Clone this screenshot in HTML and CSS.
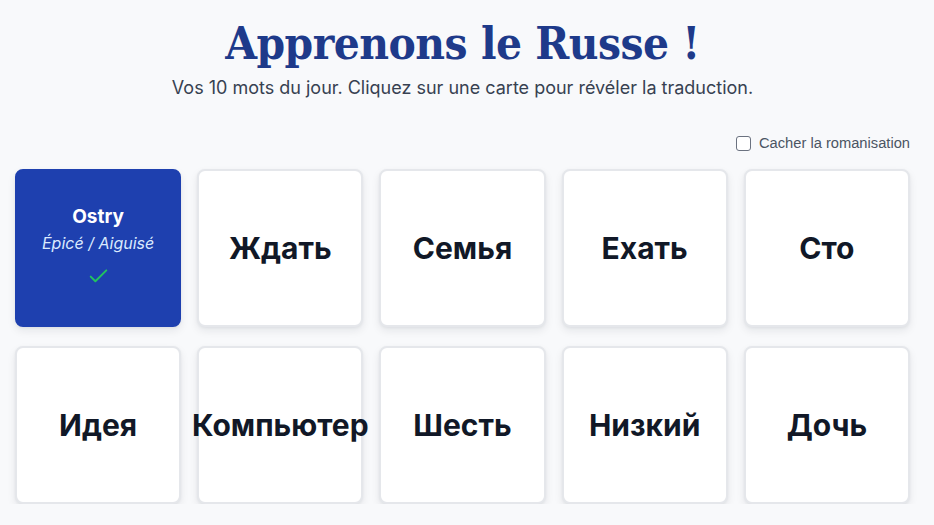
FILE: index.html
```html
<!DOCTYPE html>
<html lang="fr">
<head>
<meta charset="utf-8">
<title>Apprenons le Russe !</title>
<link rel="stylesheet" href="styles.css">
</head>
<body>
<main class="page">
  <header class="header">
    <h1 class="title">Apprenons le Russe !</h1>
    <p class="subtitle">Vos 10 mots du jour. Cliquez sur une carte pour révéler la traduction.</p>
  </header>
  <div class="toolbar">
    <label class="toggle"><input type="checkbox" class="toggle-box"><span>Cacher la romanisation</span></label>
  </div>
  <section class="grid">
    <div class="card card-revealed">
      <div class="roman">Ostry</div>
      <div class="translation">Épicé / Aiguisé</div>
      <svg class="check" viewBox="0 0 24 24" width="25" height="25"><path d="M4.5 13l4.5 4.5L19.5 7" fill="none" stroke="#22c55e" stroke-width="1.8" stroke-linecap="round" stroke-linejoin="round"/></svg>
    </div>
    <div class="card"><span class="word">Ждать</span></div>
    <div class="card"><span class="word">Семья</span></div>
    <div class="card"><span class="word">Ехать</span></div>
    <div class="card"><span class="word">Сто</span></div>
    <div class="card"><span class="word">Идея</span></div>
    <div class="card"><span class="word">Компьютер</span></div>
    <div class="card"><span class="word">Шесть</span></div>
    <div class="card"><span class="word">Низкий</span></div>
    <div class="card"><span class="word">Дочь</span></div>
  </section>
</main>
</body>
</html>
```
FILE: styles.css
```css
* { box-sizing: border-box; }
html, body { margin: 0; padding: 0; }
body {
  background: #f8f9fb;
  font-family: Inter, "Noto Sans", sans-serif;
  color: #111827;
  overflow: hidden;
}
.page {
  padding: 12px 24px 0 15px;
}
.header {
  text-align: center;
}
.title {
  margin: 0;
  font-family: "DejaVu Serif", serif;
  font-stretch: condensed;
  font-weight: 700;
  font-size: 45.5px;
  line-height: 62px;
  color: #1e3a8a;
  letter-spacing: -0.5px;
}
.subtitle {
  margin: 2px 0 0;
  font-size: 18px;
  line-height: 24px;
  color: #374151;
}
.toolbar {
  display: flex;
  justify-content: flex-end;
  margin-top: 35px;
}
.toggle {
  display: flex;
  align-items: center;
  gap: 8px;
  font-family: "Liberation Sans", Arial, sans-serif;
  font-size: 14.7px;
  color: #4b5563;
}
.toggle-box {
  margin: 0;
  width: 15px;
  height: 15px;
  appearance: none;
  border: 1px solid #6b7280;
  border-radius: 3px;
  background: #fff;
}
.grid {
  display: grid;
  grid-template-columns: repeat(5, minmax(0, 1fr));
  column-gap: 16px;
  row-gap: 19px;
  margin-top: 18px;
  width: 895px;
}
.card {
  height: 158px;
  min-width: 0;
  background: #fff;
  border: 2px solid #e5e7eb;
  border-radius: 8px;
  box-shadow: 0 4px 8px rgba(15, 23, 42, 0.08), 0 1px 3px rgba(15, 23, 42, 0.05);
  display: flex;
  flex-direction: column;
  align-items: center;
  justify-content: center;
}
.word {
  font-size: 30px;
  font-weight: 700;
  color: #111827;
  white-space: nowrap;
}
.card-revealed {
  background: #1e40af;
  border-color: #1e40af;
  color: #fff;
}
.roman {
  font-size: 19px;
  font-weight: 700;
  line-height: 24px;
  margin-top: -4px;
}
.translation {
  font-size: 16px;
  font-style: italic;
  color: #dbeafe;
  line-height: 20px;
  margin-top: 4px;
}
.check {
  margin-top: 10px;
}
```
